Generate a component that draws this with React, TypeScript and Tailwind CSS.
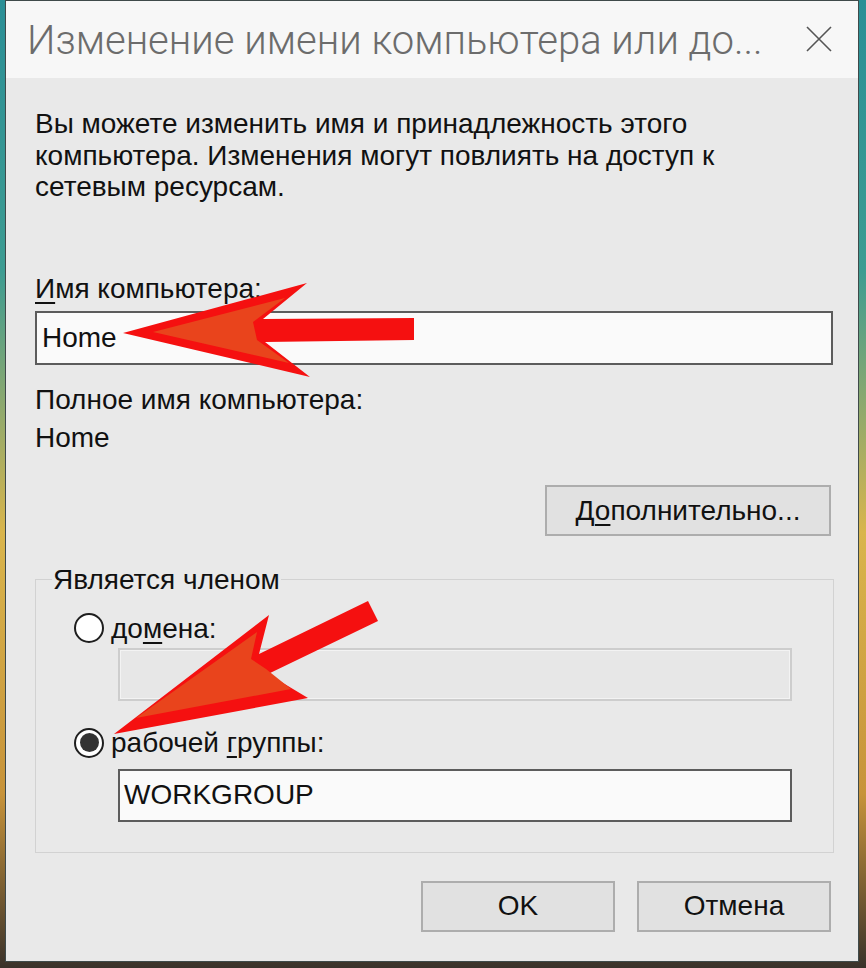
import React from 'react'

// Окно "Изменение имени компьютера или домена" с двумя красными стрелками поверх
function Radio({ checked }: { checked?: boolean }) {
  return (
    <span className="flex h-[30px] w-[30px] shrink-0 items-center justify-center rounded-full border-2 border-[#1e1e1e] bg-white">
      {checked && <span className="h-[19px] w-[19px] rounded-full bg-[#333]" />}
    </span>
  )
}

function Arrows() {
  return (
    <svg className="pointer-events-none absolute left-0 top-0" width="854" height="962" viewBox="5 0 854 962">
      {/* стрелка к полю имени */}
      <polygon points="122,332 306,282 262,318 413,317 413,339 264,341 309,376" fill="#f51010" />
      <polygon points="152,331 284,297 252,321 256,339 288,362" fill="#e9441c" />
      {/* стрелка к рабочей группе */}
      <polygon points="113,733 268,614 258,653 367,600 377,620 267,673 307,697" fill="#f51010" />
      <polygon points="135,717 256,631 250,658 265,668 290,688" fill="#e9441c" />
    </svg>
  )
}

export default function App() {
  return (
    <div className="relative h-[968px] w-[866px] overflow-hidden bg-[linear-gradient(180deg,#2b8f96_0%,#3d9c92_28%,#d9b54c_55%,#c7933a_82%,#3a322b_100%)] font-['Liberation_Sans',Arial,sans-serif] text-[28px] leading-[31.5px] text-[#111]">
      <div className="relative ml-[5px] h-[962px] w-[854px] border border-[#3f4a4a] bg-[#e9e9e9]">
        {/* заголовок */}
        <div className="flex h-[77px] items-center justify-between bg-[#f7f7f7] pl-[21px] pr-[26px]">
          <span className="mt-[2px] font-['Roboto',sans-serif] text-[40px] font-light leading-none text-[#6c6c6c]">
            Изменение имени компьютера или до...
          </span>
          <svg width="26" height="26" viewBox="0 0 26 26" className="mb-[2px]">
            <path d="M1 1 L25 25 M25 1 L1 25" stroke="#555" strokeWidth="1.6" fill="none" />
          </svg>
        </div>

        <div className="flex flex-col pl-[29px] pt-[30px]">
          <p>
            Вы можете изменить имя и принадлежность этого
            <br />
            компьютера. Изменения могут повлиять на доступ к
            <br />
            сетевым ресурсам.
          </p>

          <div className="mt-[70px]">
            <span className="underline underline-offset-[4px]">И</span>мя компьютера:
          </div>
          <div className="mt-[7px] flex h-[54px] w-[798px] items-center border-2 border-[#5c5c5c] bg-[#fafafa] pl-[5px]">
            Home
          </div>

          <div className="mt-[19px]">Полное имя компьютера:</div>
          <div className="mt-[6px]">Home</div>

          <div className="mt-[32px] flex w-[798px] justify-end pr-[2px]">
            <button className="h-[51px] w-[286px] border-2 border-[#adadad] bg-[#e1e1e1] text-[28px]">
              Д<span className="underline underline-offset-[4px]">о</span>полнительно...
            </button>
          </div>

          <fieldset className="mt-[28px] w-[799px] border border-[#d2d2d2] pb-[30px]">
            <legend className="ml-[16px] px-[1px]">Является членом</legend>
            <div className="mt-[17px] flex items-center gap-[7px] pl-[38px]">
              <Radio />
              <span>
                до<span className="underline underline-offset-[4px]">м</span>ена:
              </span>
            </div>
            <div className="ml-[82px] mt-[4px] h-[53px] w-[674px] border-2 border-[#cdcdcd] bg-[#e7e7e7] shadow-[inset_0_0_0_1px_#f3f3f3]" />
            <div className="mt-[26px] flex items-center gap-[7px] pl-[38px]">
              <Radio checked />
              <span>
                рабочей <span className="underline underline-offset-[4px]">г</span>руппы:
              </span>
            </div>
            <div className="ml-[82px] mt-[10px] flex h-[53px] w-[674px] items-center border-2 border-[#5c5c5c] bg-[#fafafa] pl-[4px]">
              WORKGROUP
            </div>
          </fieldset>

          <div className="mt-[28px] flex w-[798px] justify-end gap-[22px] pr-[2px]">
            <button className="h-[51px] w-[194px] border-2 border-[#adadad] bg-[#e1e1e1] text-[28px]">OK</button>
            <button className="h-[51px] w-[194px] border-2 border-[#adadad] bg-[#e1e1e1] text-[28px]">Отмена</button>
          </div>
        </div>

        <Arrows />
      </div>
    </div>
  )
}
